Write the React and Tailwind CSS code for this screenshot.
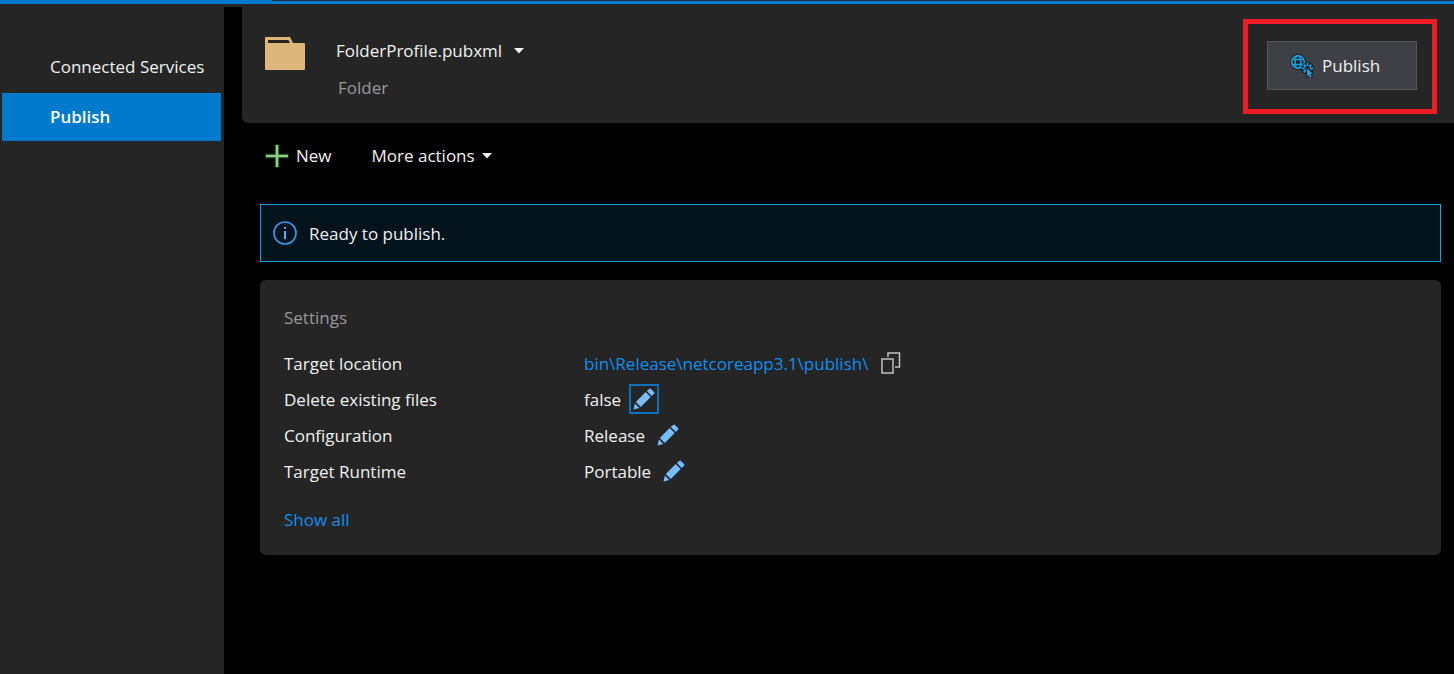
function FolderIcon() {
  return (
    <svg width="40" height="34" viewBox="0 0 40 34" aria-hidden="true">
      <path
        fill="#dcb67a"
        fillRule="evenodd"
        d="M1 0H25L28 6H39Q40 6 40 7V32Q40 33 39 33H1Q0 33 0 32V1Q0 0 1 0ZM3 3V6H25L23.500 3Z"
      />
    </svg>
  );
}

function PlusIcon() {
  return (
    <svg width="24" height="24" viewBox="0 0 24 24" aria-hidden="true">
      <path fill="#1d2b1d" d="M9.500 0h5v9.500H24v5h-9.500V24h-5v-9.500H0v-5h9.500z" />
      <path fill="#89d185" d="M10.700 1h2.600v9.700H23v2.600h-9.700V23h-2.600v-9.700H1v-2.600h9.700z" />
    </svg>
  );
}

function PublishIcon() {
  return (
    <svg width="24" height="24" viewBox="0 0 24 24" fill="none" aria-hidden="true">
      <circle cx="8" cy="8" r="8" fill="#252526" />
      <circle cx="17.500" cy="14.500" r="6.500" fill="#252526" />
      <path d="M16 13v11l3-2 2 2 2-1-1-3 2-1z" fill="#252526" />
      <g stroke="#1ba1e2" strokeWidth="1.500">
        <circle cx="8" cy="8" r="6.300" />
        <ellipse cx="8" cy="8" rx="2.900" ry="6.300" />
        <path d="M2.300 5.500h11.400M2.300 10.500h11.400" />
      </g>
      <circle cx="17.500" cy="14.500" r="6" fill="#252526" />
      <g stroke="#1ba1e2" strokeWidth="1.800">
        <path d="M17.500 9v3M12.200 14.500h3M20 14.500h3M13.700 10.700l2.100 2.100M21.300 10.700l-2.100 2.100M13.700 18.300l2.100-2.100" />
      </g>
      <path d="M17 14.500v7.700l1.700-1.500 1.300 2.700 1.700-.8-1.300-2.600h2.400z" fill="#1ba1e2" />
    </svg>
  );
}

function InfoIcon() {
  return (
    <svg width="24" height="24" viewBox="0 0 24 24" aria-hidden="true">
      <circle cx="12" cy="12" r="11" fill="none" stroke="#3794e8" strokeWidth="1.700" />
      <path fill="#55aaff" d="M11 6h2v2h-2zM11 10h2v8h-2z" />
    </svg>
  );
}

function PencilIcon() {
  return (
    <svg width="22" height="22" viewBox="0 0 22 22" fill="#75beff" aria-hidden="true">
      <path d="M12.700 4.100L17.700 9.100 7.800 19 2.800 14z" />
      <path d="M16.200.9Q17 .2 17.700.8L21.200 4.300Q21.700 5 21.200 5.600L18.800 8 13.800 3z" />
      <path d="M1.900 15.500L6.400 20 .5 21.500z" />
    </svg>
  );
}

function CopyIcon() {
  return (
    <svg width="20" height="22" viewBox="0 0 20 22" fill="none" stroke="#c0c0c0" strokeWidth="1.500" aria-hidden="true">
      <path d="M1 7h11v14H1z" />
      <path d="M7 5V1h11.500v14H14" />
    </svg>
  );
}

function Caret() {
  return (
    <svg width="10" height="6" viewBox="0 0 10 6" aria-hidden="true">
      <path fill="#f1f1f1" d="M0 0h10L5 5.500z" />
    </svg>
  );
}

function EditButton({ label, focused }) {
  return (
    <button
      type="button"
      aria-label={label}
      className={
        focused
          ? "mb-[3px] flex size-[30px] items-center justify-center border-2 border-[#0a70c0]"
          : "mb-[3px] flex size-[30px] items-center justify-center border-2 border-transparent"
      }
    >
      <PencilIcon />
    </button>
  );
}

function Setting({ label, children }) {
  return (
    <div className="flex h-9 items-center">
      <dt className="w-[300px] shrink-0">{label}</dt>
      <dd className="flex items-center gap-2">{children}</dd>
    </div>
  );
}

export default function App() {
  return (
    <div className="flex min-h-screen flex-col bg-black font-['Open_Sans','Noto_Sans',sans-serif] text-[17px] leading-6 text-[#f1f1f1]">
      <div className="flex h-1 bg-[#007acc]">
        <div className="w-[272px]" />
        <div className="h-px flex-1 bg-[#2d2d30]" />
      </div>
      <div className="h-[3px] bg-[#252526]" />
      <div className="flex flex-1">
        <nav className="w-56 shrink-0 bg-[#252526] pt-9 pr-[3px] pl-0.5">
          <a href="#connected-services" className="mb-0.5 flex h-12 items-center pl-12 whitespace-nowrap">
            Connected Services
          </a>
          <a href="#publish" aria-current="page" className="flex h-12 items-center bg-[#007acc] pl-12 font-semibold text-white">
            Publish
          </a>
        </nav>

        <main className="min-w-0 flex-1 pl-[18px]">
          <header className="flex h-[116px] justify-between rounded-bl-md bg-[#252526] pt-3 pr-[17px] pl-[23px]">
            <div className="flex gap-[31px] pt-[18px]">
              <FolderIcon />
              <div className="pt-0.5">
                <button type="button" className="flex items-center gap-3">
                  FolderProfile.pubxml
                  <Caret />
                </button>
                <p className="mt-[13px] pl-0.5 text-[#999999]">Folder</p>
              </div>
            </div>
            <div className="flex h-[95px] w-[194px] justify-end border-[5px] border-[#ed1c24] pt-[17px] pr-[15px]">
              <button
                type="button"
                className="flex h-[49px] w-[150px] items-center gap-2 border border-[#555555] bg-[#3f3f46] pl-[22px]"
              >
                <PublishIcon />
                Publish
              </button>
            </div>
          </header>

          <div className="flex items-center gap-10 pt-[21px] pl-[23px]">
            <button type="button" className="flex items-center gap-[7px]">
              <PlusIcon />
              New
            </button>
            <button type="button" className="flex items-center gap-[7px]">
              More actions
              <Caret />
            </button>
          </div>

          <div className="pr-[13px] pl-[18px]">
            <div role="status" className="mt-9 flex h-[58px] items-center gap-3 border border-[#1ba1e2] bg-[#02131b] px-3">
              <InfoIcon />
              <span className="pt-0.5">Ready to publish.</span>
            </div>

            <section className="mt-[18px] rounded-md bg-[#252526] px-6 pt-[26px] pb-[23px]">
              <h2 className="text-[#999999]">Settings</h2>
              <dl className="mt-4">
                <Setting label="Target location">
                  <a href="#target" className="text-[#0e8ff0]">
                    bin\Release\netcoreapp3.1\publish\
                  </a>
                  <button type="button" aria-label="Copy target location" className="mb-[3px] pl-[5px]">
                    <CopyIcon />
                  </button>
                </Setting>
                <Setting label="Delete existing files">
                  false
                  <EditButton label="Edit delete existing files" focused />
                </Setting>
                <Setting label="Configuration">
                  Release
                  <EditButton label="Edit configuration" />
                </Setting>
                <Setting label="Target Runtime">
                  Portable
                  <EditButton label="Edit target runtime" />
                </Setting>
              </dl>
              <a href="#all" className="mt-[18px] block w-fit text-[#0e8ff0]">
                Show all
              </a>
            </section>
          </div>
        </main>
      </div>
    </div>
  );
}
